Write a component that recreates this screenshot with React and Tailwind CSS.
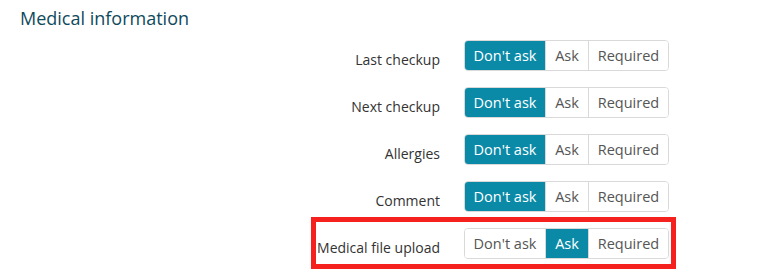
import React from "react";

const rows = [
  { label: "Last checkup", value: 0 },
  { label: "Next checkup", value: 0 },
  { label: "Allergies", value: 0 },
  { label: "Comment", value: 0 },
  { label: "Medical file upload", value: 1, highlight: true },
];

const opts = ["Don't ask", "Ask", "Required"];

function Group({ value }) {
  return (
    <div className="flex h-[31px] rounded-[4px] border border-[#d9d9d9] overflow-hidden">
      {opts.map((o, i) => {
        const active = i === value;
        const w = i === 0 ? "w-[80px]" : i === 1 ? "w-[43px]" : "w-[80px]";
        return (
          <div
            key={o}
            className={`${w} flex items-center justify-center text-[14.5px] ${
              i > 0 ? "border-l border-[#d9d9d9]" : ""
            } ${active ? "bg-[#0b8aa8] text-white font-medium border-[#0b8aa8]" : "bg-white text-[#555]"}`}
          >
            {o}
          </div>
        );
      })}
    </div>
  );
}

export default function App() {
  return (
    <div className="relative w-[775px] h-[277px] bg-white" style={{ fontFamily: '"Open Sans", sans-serif' }}>
      <div className="pl-[20px] pt-[5px] text-[18px] text-[#0f4a5c] leading-[26px]">Medical information</div>
      <div className="flex flex-col gap-[16px] mt-[9px]">
        {rows.map((r) => (
          <div key={r.label} className="flex items-start">
            <div className="w-[440px] text-right text-[14px] text-[#333] pt-[10px] leading-[20px]">{r.label}</div>
            <div className="ml-[24px]">
              <Group value={r.value} />
            </div>
          </div>
        ))}
      </div>
      <div className="absolute left-[311px] top-[217px] w-[365px] h-[52px] border-[5px] border-[#f5211f] pointer-events-none" />
    </div>
  );
}
